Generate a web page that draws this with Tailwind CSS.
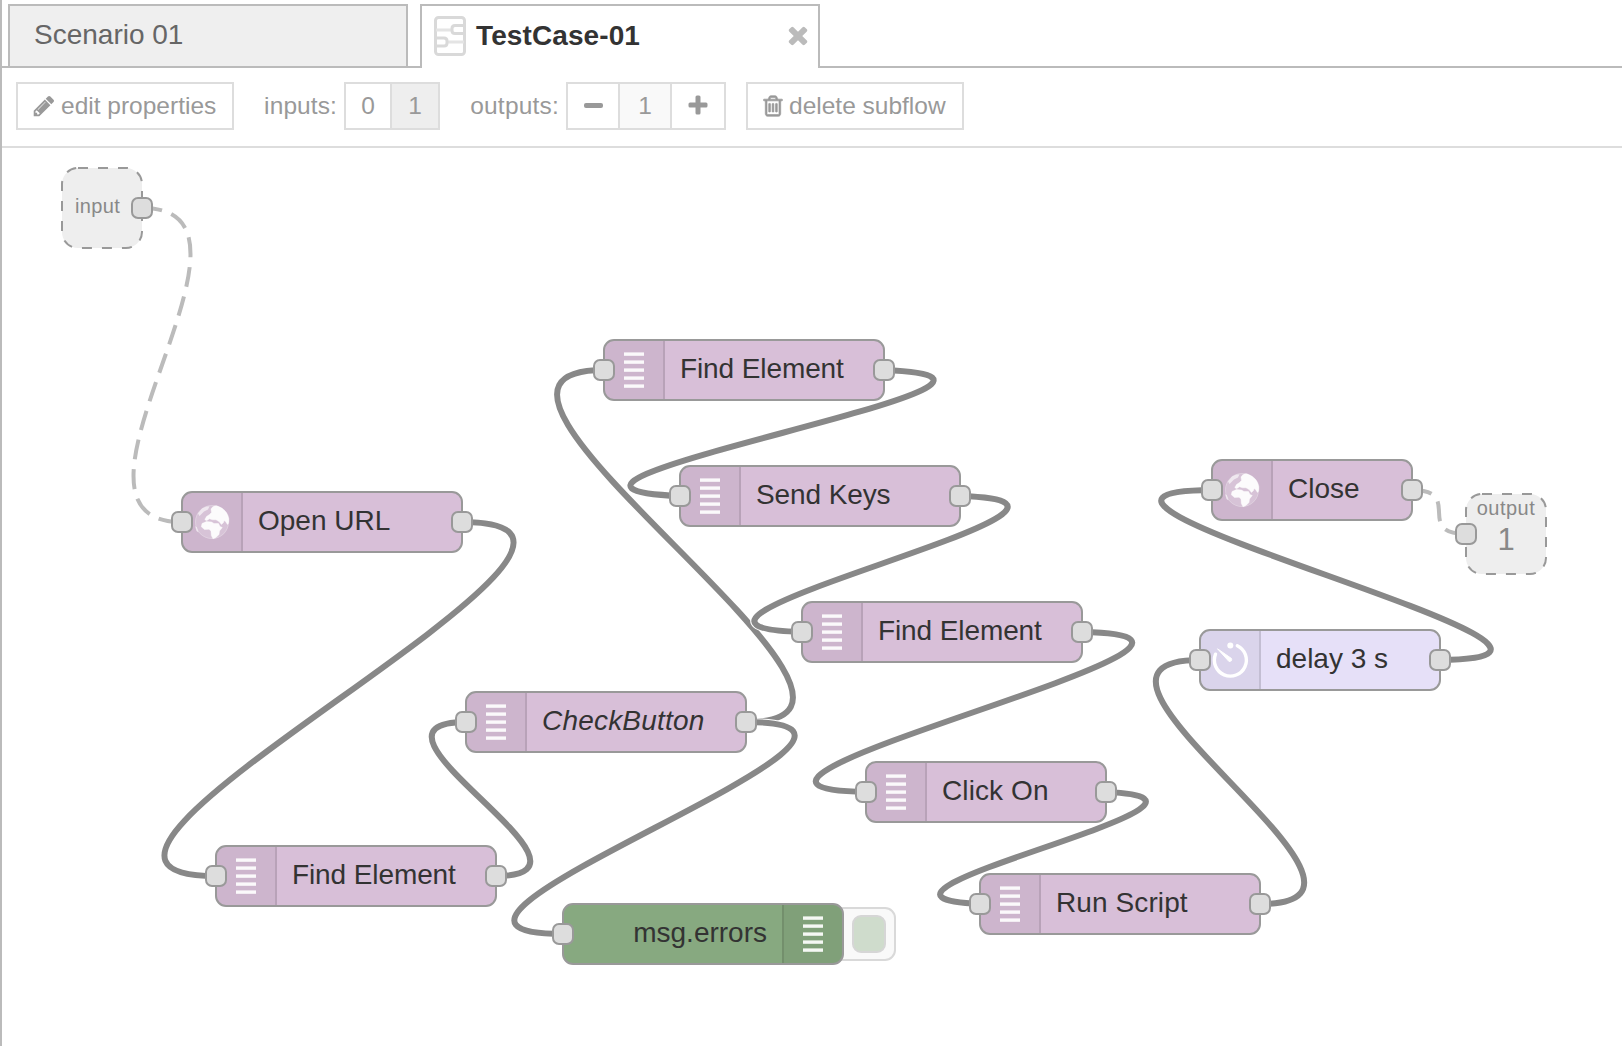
<!DOCTYPE html>
<html lang="en">
<head>
<meta charset="utf-8">
<title>TestCase-01</title>
<script src="https://cdn.jsdelivr.net/npm/@tailwindcss/browser@4"></script>
</head>
<body class="w-[1622px] h-[1046px] overflow-hidden bg-white font-['Liberation_Sans',Arial,sans-serif]">

<!-- shared icons -->
<svg class="hidden">
  <symbol id="list" viewBox="0 0 20 36">
    <g fill="#fff" fill-opacity=".92"><rect y=".4" width="20" height="3.4"/><rect y="8.4" width="20" height="3.4"/><rect y="16.4" width="20" height="3.4"/><rect y="24.4" width="20" height="3.4"/><rect y="32.4" width="20" height="3.4"/></g>
  </symbol>
  <symbol id="globe" viewBox="0 0 36 36">
    <circle cx="18" cy="18" r="17" fill="#fff" fill-opacity=".2"/>
    <g fill="#fff" fill-opacity=".93" stroke="#fff" stroke-opacity=".4" stroke-linejoin="round">
      <path d="M17 5 C19 1.500 22 1.500 24 2.300 C30 4.500 34 9 34.800 14.500 C35 18 34.500 20 33.500 20.500 L31.500 17.500 L30 16.500 L29.500 18.500 L27.500 20.500 L25 17.500 L22 15.800 L18.500 15.800 L15.500 14.800 L12.500 16.800 L10.800 15.500 L12.500 12.500 L15.500 10.500 L17.500 8.500 Z"/>
      <path d="M8 19.500 L12.500 17.600 L17.500 18 L20 19.500 L24.500 19.500 L26 22.500 L28.300 23.500 L25.500 27 L25 30.500 L22 33.500 L19 34.800 L17.300 31.500 L17 27 L15 25.300 L10.500 25.500 L7.300 22.800 Z"/>
    </g>
    <g fill="#fff" fill-opacity=".6">
      <path d="M4 9.500 L8 4.500 L12 2.800 L15.500 2.200 L14 5.500 L10 7.500 L5.500 12 Z"/>
      <path d="M1 22 L3 23.500 L4.500 28.500 L2.500 27 Z"/>
    </g>
    <circle cx="18" cy="18" r="16.500" fill="none" stroke="#fff" stroke-opacity=".2"/>
  </symbol>
  <symbol id="timer" viewBox="0 0 40 40">
    <path d="M27.300 5.700 A16 16 0 1 1 5.500 14.200" fill="none" stroke="#fff" stroke-width="3.400" stroke-linecap="round"/>
    <circle cx="20.300" cy="5.600" r="3" fill="#fff"/>
    <path d="M7.500 8.800 L21.500 18.500 Q22.500 21.500 19 21.500 Z" fill="#fff" stroke="#fff" stroke-linejoin="round"/>
  </symbol>
</svg>

<div class="flex h-full flex-col border-l-2 border-[#bbb]">

  <!-- tabs -->
  <div class="flex h-[68px] shrink-0 items-end">
    <div class="h-[68px] w-[6px] border-b-2 border-[#bbb]"></div>
    <div class="flex h-16 w-[400px] items-center border-2 border-[#bbb] bg-[#efefef] pb-[2px] pl-6 text-[28px] leading-7 text-[#666]">Scenario 01</div>
    <div class="h-[68px] w-3 border-b-2 border-[#bbb]"></div>
    <div class="flex h-16 w-[400px] items-center border-x-2 border-t-2 border-[#bbb] bg-white pr-[6px] pl-3 pb-[2px]">
      <svg class="h-10 w-8" viewBox="0 0 32 40" fill="none" stroke="#d9d9d9" stroke-width="3">
        <rect x="1.500" y="1.500" width="29" height="37" rx="3"/>
        <path d="M2 14 H18 M13 26 H30" stroke="#e4e4e4"/>
        <path d="M30 9.500 H21 Q18 9.500 18 12.500 V14.500 Q18 17.500 21 17.500 H30 M2 22 H10 Q13 22 13 25 V27 Q13 30 10 30 H2"/>
      </svg>
      <span class="ml-[10px] text-[28px] font-bold leading-7 tracking-[0.1px] text-[#333]">TestCase-01</span>
      <svg class="ml-auto mb-[3px] h-7 w-7" viewBox="0 0 1792 1792" fill="#bbb"><path d="M1490 1322q0 40-28 68l-136 136q-28 28-68 28t-68-28l-294-294-294 294q-28 28-68 28t-68-28l-136-136q-28-28-28-68t28-68l294-294-294-294q-28-28-28-68t28-68l136-136q28-28 68-28t68 28l294 294 294-294q28-28 68-28t68 28l136 136q28 28 28 68t-28 68l-294 294 294 294q28 28 28 68z"/></svg>
    </div>
    <div class="h-[68px] flex-1 border-b-2 border-[#bbb]"></div>
  </div>

  <!-- subflow toolbar -->
  <div class="flex h-20 shrink-0 border-b-2 border-[#ddd] pt-[14px] pl-[14px] text-[24.5px] leading-6 text-[#999]">
    <div class="flex h-12 w-[218px] items-center border-2 border-[#ddd] pl-[14px]">
      <svg class="h-6 w-6" viewBox="0 0 1792 1792" fill="currentColor"><path d="M491 1536l91-91-235-235-91 91v107h128v128h107zm523-928q0-22-22-22-10 0-17 7l-542 542q-7 7-7 17 0 22 22 22 10 0 17-7l542-542q7-7 7-17zm-54-192l416 416-832 832h-416v-416zm683 96q0 53-37 90l-166 166-416-416 166-165q36-38 90-38 53 0 91 38l235 234q37 39 37 91z"/></svg>
      <span class="ml-[5px] whitespace-nowrap">edit properties</span>
    </div>
    <div class="flex h-12 w-[110px] items-center justify-end pr-[7px] tracking-[0.1px]">inputs:</div>
    <div class="flex h-12 w-24 border-2 border-[#ddd]">
      <div class="flex w-11 items-center justify-center">0</div>
      <div class="flex flex-1 items-center justify-center border-l-2 border-[#ddd] bg-[#eee]">1</div>
    </div>
    <div class="flex h-12 w-[126px] items-center justify-end pr-[7px] tracking-[0.2px]">outputs:</div>
    <div class="flex h-12 w-40 border-2 border-[#ddd]">
      <div class="flex w-[50px] items-center justify-center pb-[2px]"><div class="h-[5px] w-[19px] rounded-[2px] bg-[#999]"></div></div>
      <div class="flex w-[54px] items-center justify-center border-x-2 border-[#ddd] bg-[#f9f9f9]">1</div>
      <div class="flex flex-1 items-center justify-center pb-[2px]"><svg class="h-5 w-5" viewBox="0 0 20 20" fill="#999"><rect x=".500" y="7.500" width="19" height="5" rx="1.500"/><rect x="7.500" y=".500" width="5" height="19" rx="1.500"/></svg></div>
    </div>
    <div class="ml-5 flex h-12 w-[218px] items-center border-2 border-[#ddd] pl-[13px]">
      <svg class="h-6 w-6" viewBox="0 0 1792 1792" fill="currentColor" stroke="currentColor" stroke-width="50"><path d="M704 736v576q0 14-9 23t-23 9h-64q-14 0-23-9t-9-23v-576q0-14 9-23t23-9h64q14 0 23 9t9 23zm256 0v576q0 14-9 23t-23 9h-64q-14 0-23-9t-9-23v-576q0-14 9-23t23-9h64q14 0 23 9t9 23zm256 0v576q0 14-9 23t-23 9h-64q-14 0-23-9t-9-23v-576q0-14 9-23t23-9h64q14 0 23 9t9 23zm128 724v-948h-896v948q0 22 7 40.500t14.500 27 10.500 8.500h832q3 0 10.500-8.500t14.500-27 7-40.500zm-672-1076h448l-48-117q-7-9-17-11h-317q-10 2-17 11zm928 32v64q0 14-9 23t-23 9h-96v948q0 83-47 143.500t-113 60.500h-832q-66 0-113-58.500t-47-141.500v-952h-96q-14 0-23-9t-9-23v-64q0-14 9-23t23-9h309l70-167q15-37 54-63t79-26h320q40 0 79 26t54 63l70 167h309q14 0 23 9t9 23z"/></svg>
      <span class="ml-1 whitespace-nowrap">delete subflow</span>
    </div>
  </div>

  <!-- flow canvas; node coordinates are relative to its top left corner (2,148) -->
  <div class="relative flex-1 overflow-hidden text-[28px] leading-7 text-[#333]">

    <svg class="absolute top-0 left-0 h-[898px] w-[1620px]" viewBox="2 148 1620 898" fill="none">
      <g id="wires"></g>
      <rect x="62" y="168" width="80" height="80" rx="16" fill="#eee" stroke="#999" stroke-width="2" stroke-dasharray="10 10"/>
      <rect x="1466" y="494" width="80" height="80" rx="16" fill="#eee" stroke="#999" stroke-width="2" stroke-dasharray="10 10"/>
    </svg>

    <div class="absolute top-[48px] left-[73px] text-[20px] leading-5 tracking-[0.35px] text-[#888]">input</div>
    <div class="absolute top-[350px] left-[1464px] flex w-[80px] flex-col items-center text-[#888]">
      <span class="text-[20px] leading-5 tracking-[0.5px]">output</span>
      <span class="pt-[6px] text-[31px] leading-8">1</span>
    </div>

    <div class="absolute top-[343px] left-[179px] flex h-[62px] w-[282px] overflow-hidden rounded-[11px] border-2 border-[#999] bg-[#d8bfd8]">
      <div class="flex w-[60px] items-center justify-center border-r-2 border-black/10 bg-black/5"><svg class="h-9 w-9"><use href="#globe"/></svg></div>
      <span class="self-center pb-[2px] pl-[15px]">Open URL</span>
    </div>
    <div class="absolute top-[697px] left-[213px] flex h-[62px] w-[282px] overflow-hidden rounded-[11px] border-2 border-[#999] bg-[#d8bfd8]">
      <div class="flex w-[60px] items-center justify-center border-r-2 border-black/10 bg-black/5"><svg class="h-9 w-5"><use href="#list"/></svg></div>
      <span class="self-center pb-[2px] pl-[15px] tracking-[-0.1px]">Find Element</span>
    </div>
    <div class="absolute top-[543px] left-[463px] flex h-[62px] w-[282px] overflow-hidden rounded-[11px] border-2 border-[#999] bg-[#d8bfd8]">
      <div class="flex w-[60px] items-center justify-center border-r-2 border-black/10 bg-black/5"><svg class="h-9 w-5"><use href="#list"/></svg></div>
      <span class="self-center pb-[2px] pl-[15px] tracking-[0.2px] italic">CheckButton</span>
    </div>
    <div class="absolute top-[191px] left-[601px] flex h-[62px] w-[282px] overflow-hidden rounded-[11px] border-2 border-[#999] bg-[#d8bfd8]">
      <div class="flex w-[60px] items-center justify-center border-r-2 border-black/10 bg-black/5"><svg class="h-9 w-5"><use href="#list"/></svg></div>
      <span class="self-center pb-[2px] pl-[15px] tracking-[-0.1px]">Find Element</span>
    </div>
    <div class="absolute top-[317px] left-[677px] flex h-[62px] w-[282px] overflow-hidden rounded-[11px] border-2 border-[#999] bg-[#d8bfd8]">
      <div class="flex w-[60px] items-center justify-center border-r-2 border-black/10 bg-black/5"><svg class="h-9 w-5"><use href="#list"/></svg></div>
      <span class="self-center pb-[2px] pl-[15px] tracking-[-0.1px]">Send Keys</span>
    </div>
    <div class="absolute top-[453px] left-[799px] flex h-[62px] w-[282px] overflow-hidden rounded-[11px] border-2 border-[#999] bg-[#d8bfd8]">
      <div class="flex w-[60px] items-center justify-center border-r-2 border-black/10 bg-black/5"><svg class="h-9 w-5"><use href="#list"/></svg></div>
      <span class="self-center pb-[2px] pl-[15px] tracking-[-0.1px]">Find Element</span>
    </div>
    <div class="absolute top-[613px] left-[863px] flex h-[62px] w-[242px] overflow-hidden rounded-[11px] border-2 border-[#999] bg-[#d8bfd8]">
      <div class="flex w-[60px] items-center justify-center border-r-2 border-black/10 bg-black/5"><svg class="h-9 w-5"><use href="#list"/></svg></div>
      <span class="self-center pb-[2px] pl-[15px] tracking-[0.1px]">Click On</span>
    </div>
    <div class="absolute top-[725px] left-[977px] flex h-[62px] w-[282px] overflow-hidden rounded-[11px] border-2 border-[#999] bg-[#d8bfd8]">
      <div class="flex w-[60px] items-center justify-center border-r-2 border-black/10 bg-black/5"><svg class="h-9 w-5"><use href="#list"/></svg></div>
      <span class="self-center pb-[2px] pl-[15px] tracking-[0.1px]">Run Script</span>
    </div>
    <div class="absolute top-[481px] left-[1197px] flex h-[62px] w-[242px] overflow-hidden rounded-[11px] border-2 border-[#999] bg-[#e6e0f8]">
      <div class="flex w-[60px] items-center justify-center border-r-2 border-black/10 bg-black/5"><svg class="h-10 w-10"><use href="#timer"/></svg></div>
      <span class="self-center pb-[2px] pl-[15px]">delay 3 s</span>
    </div>
    <div class="absolute top-[311px] left-[1209px] flex h-[62px] w-[202px] overflow-hidden rounded-[11px] border-2 border-[#999] bg-[#d8bfd8]">
      <div class="flex w-[60px] items-center justify-center border-r-2 border-black/10 bg-black/5"><svg class="h-9 w-9"><use href="#globe"/></svg></div>
      <span class="self-center pb-[2px] pl-[15px]">Close</span>
    </div>

    <!-- debug node with its toggle button -->
    <div class="absolute top-[759px] left-[820px] flex h-[54px] w-[74px] items-center justify-end rounded-[11px] border-2 border-[#d9d9d9] bg-[#f9f9f9] pr-2">
      <div class="h-[38px] w-[34px] rounded-[9px] border-2 border-[#d6d6d6] bg-[#cfdccc]"></div>
    </div>
    <div class="absolute top-[755px] left-[560px] flex h-[62px] w-[282px] justify-end overflow-hidden rounded-[11px] border-2 border-[#999] bg-[#87a980]">
      <span class="self-center pr-[15px] pb-[2px]">msg.errors</span>
      <div class="flex w-[60px] items-center justify-center border-l-2 border-black/10 bg-black/5"><svg class="h-9 w-5"><use href="#list"/></svg></div>
    </div>

    <svg class="absolute top-0 left-0 h-[898px] w-[1620px]" viewBox="2 148 1620 898">
      <g id="ports" fill="#ddd" stroke="#999" stroke-width="2"></g>
    </svg>
  </div>
</div>

<script>
  const NS = 'http://www.w3.org/2000/svg';
  const add = (parent, tag, attrs) => {
    const el = document.createElementNS(NS, tag);
    for (const k in attrs) el.setAttribute(k, attrs[k]);
    parent.appendChild(el);
  };

  // Bezier between an output port and an input port; loops back when the target lies to the left.
  const NODE_W = 200, NODE_H = 60;
  function wirePath([x1, y1, x2, y2]) {
    const dx = x2 - x1, dy = y2 - y1, delta = Math.hypot(dx, dy);
    let scale = 0.75, scaleY = 0;
    if (delta < NODE_W) scale = 0.75 - 0.75 * ((NODE_W - delta) / NODE_W);
    if (dx < 0) {
      scale += 2 * (Math.min(5 * NODE_W, Math.abs(dx)) / (5 * NODE_W));
      if (Math.abs(dy) < 3 * NODE_H) {
        scaleY = (dy > 0 ? 0.5 : -0.5) * ((3 * NODE_H - Math.abs(dy)) / (3 * NODE_H)) * (Math.min(NODE_W, Math.abs(dx)) / NODE_W);
      }
    }
    return `M${x1} ${y1} C${x1 + scale * NODE_W} ${y1 + scaleY * NODE_H} ${x2 - scale * NODE_W} ${y2 - scaleY * NODE_H} ${x2} ${y2}`;
  }

  const links = [
    [462, 522, 216, 876], [496, 876, 466, 722], [746, 722, 604, 370], [746, 722, 563, 934],
    [884, 370, 680, 496], [960, 496, 802, 632], [1082, 632, 866, 792], [1106, 792, 980, 904],
    [1260, 904, 1200, 660], [1440, 660, 1212, 490]
  ];
  const subflowLinks = [[142, 208, 182, 522], [1412, 490, 1466, 534]];

  const wires = document.getElementById('wires');
  for (const l of links) {
    add(wires, 'path', { d: wirePath(l), stroke: '#fff', 'stroke-width': 8 });
    add(wires, 'path', { d: wirePath(l), stroke: '#888', 'stroke-width': 6 });
  }
  for (const l of subflowLinks) {
    add(wires, 'path', { d: wirePath(l), stroke: '#bbb', 'stroke-width': 4, 'stroke-dasharray': '20 10' });
  }

  const ports = document.getElementById('ports');
  const seen = new Set();
  for (const [x1, y1, x2, y2] of [...links, ...subflowLinks]) {
    for (const [x, y] of [[x1, y1], [x2, y2]]) {
      if (seen.has(x + ',' + y)) continue;
      seen.add(x + ',' + y);
      add(ports, 'rect', { x: x - 10, y: y - 10, width: 20, height: 20, rx: 6 });
    }
  }
</script>
</body>
</html>
